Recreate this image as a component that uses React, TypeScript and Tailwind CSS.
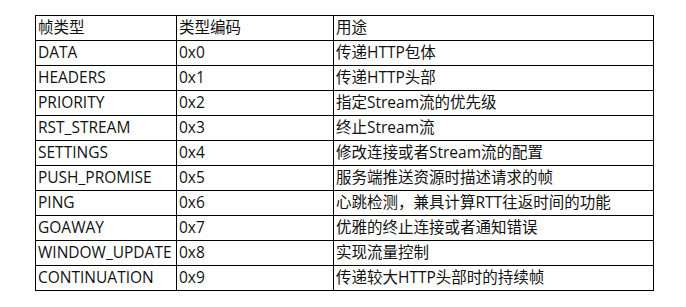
const rows: [string, string, string][] = [
  ["DATA", "0x0", "传递HTTP包体"],
  ["HEADERS", "0x1", "传递HTTP头部"],
  ["PRIORITY", "0x2", "指定Stream流的优先级"],
  ["RST_STREAM", "0x3", "终止Stream流"],
  ["SETTINGS", "0x4", "修改连接或者Stream流的配置"],
  ["PUSH_PROMISE", "0x5", "服务端推送资源时描述请求的帧"],
  ["PING", "0x6", "心跳检测，兼具计算RTT往返时间的功能"],
  ["GOAWAY", "0x7", "优雅的终止连接或者通知错误"],
  ["WINDOW_UPDATE", "0x8", "实现流量控制"],
  ["CONTINUATION", "0x9", "传递较大HTTP头部时的持续帧"],
];

export default function App() {
  const cell = "border border-black h-[25px] p-0 pl-[2px] align-middle leading-none whitespace-nowrap";
  return (
    <div
      className="w-[686px] h-[307px] bg-white pt-[15px] pl-[35px] text-[15.5px] text-[#111]"
      style={{ fontFamily: '"Open Sans", "Noto Sans CJK SC", sans-serif' }}
    >
      <table className="border-collapse table-fixed w-[618px]">
        <colgroup>
          <col className="w-[141px]" />
          <col className="w-[157px]" />
          <col className="w-[320px]" />
        </colgroup>
        <tbody>
          <tr>
            <td className={cell}>帧类型</td>
            <td className={cell}>类型编码</td>
            <td className={cell}>用途</td>
          </tr>
          {rows.map(([name, code, use]) => (
            <tr key={name}>
              <td className={cell}>{name}</td>
              <td className={cell}>{code}</td>
              <td className={cell}>{use}</td>
            </tr>
          ))}
        </tbody>
      </table>
    </div>
  );
}
